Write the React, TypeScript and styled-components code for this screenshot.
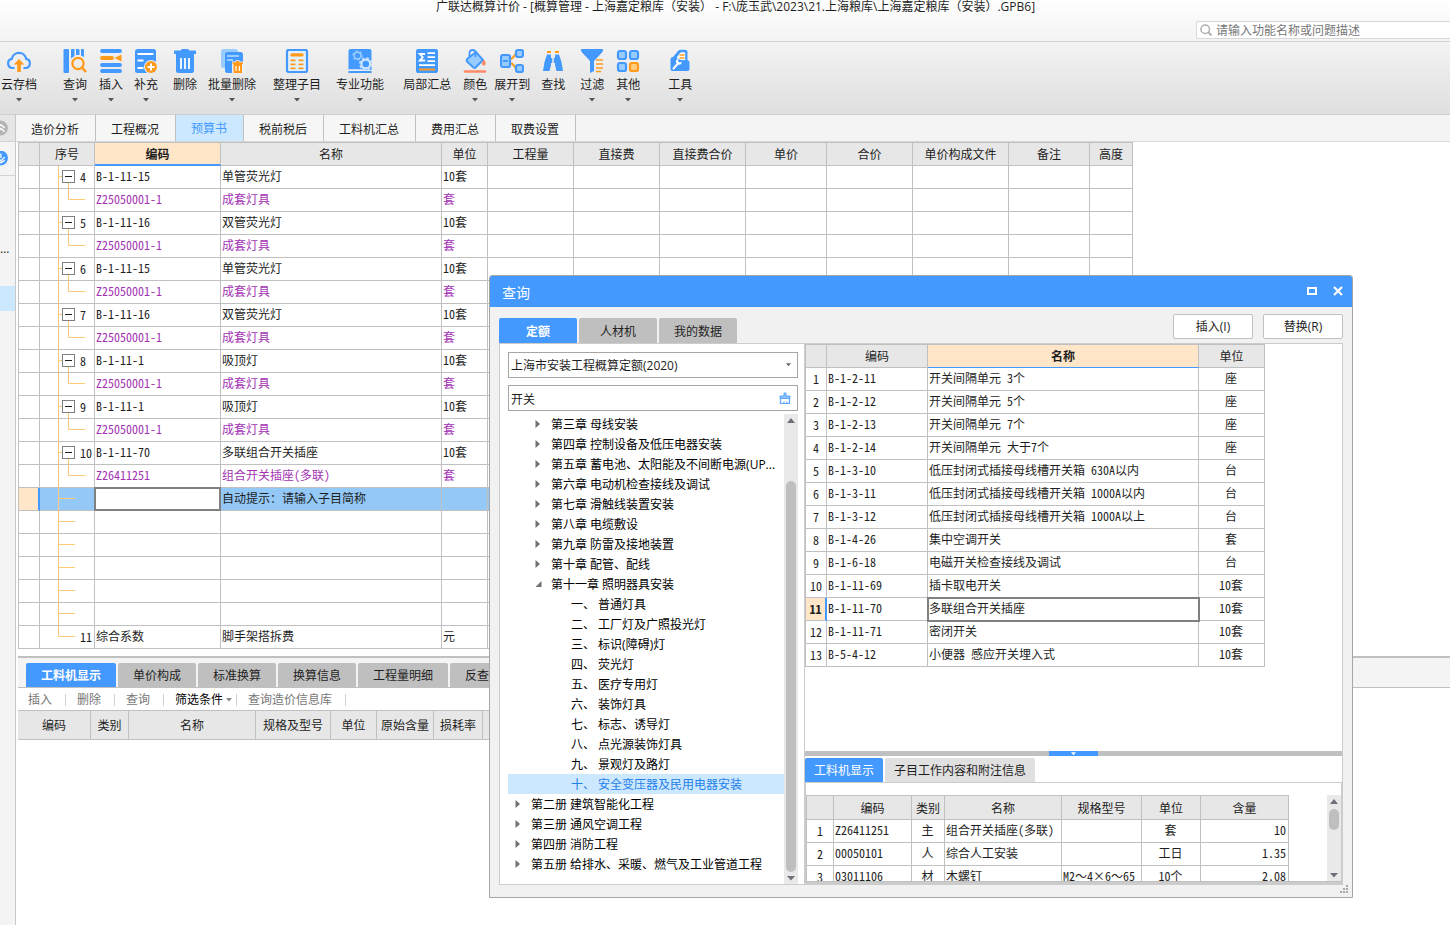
import React from "react";
import styled, { createGlobalStyle, css } from "styled-components";

const BLUE = "#4499ff";
const ORANGE = "#ff9a1a";
const LINE = "#c0c0c0";
const UI = `"Open Sans", "Noto Sans CJK SC", sans-serif`;
const GRID = `"Noto Sans CJK SC", sans-serif`;

const Global = createGlobalStyle`
  *, *::before, *::after { box-sizing: border-box; }
  body { margin: 0; background: #fff; font: 12px/16px ${UI}; color: #1e1e1e; overflow: hidden; }
  button, input, select { font: inherit; color: inherit; margin: 0; padding: 0; border: 0; background: none; border-radius: 0; }
  svg { display: block; }
`;

/* ---------- page frame ---------- */
const Page = styled.div`
  position: relative;
  display: flex;
  flex-direction: column;
  min-height: 100vh;
`;
const TitleBar = styled.header`
  display: flex;
  flex-direction: column;
  height: 42px;
  border-bottom: 1px solid #d2d2d2;
  background: linear-gradient(#ffffff, #f3f3f3);
`;
const Title = styled.h1`
  margin: 0 0 7px;
  padding-left: 21px;
  font-size: 12px;
  line-height: 14px;
  font-weight: 400;
  text-align: center;
  white-space: pre;
`;
const Search = styled.label`
  display: flex;
  align-items: center;
  gap: 4px;
  align-self: flex-end;
  width: 254px;
  height: 18px;
  padding-left: 3px;
  border: 1px solid #d8d8d8;
  border-right: 0;
  border-radius: 2px 0 0 2px;
  background: #fff;
  input {
    flex: 1;
    min-width: 0;
    outline: 0;
    padding-top: 1px;
    line-height: 16px;
    &::placeholder { color: #777; opacity: 1; }
  }
`;
const Toolbar = styled.nav`
  display: flex;
  height: 73px;
  padding: 7px 0 0 1px;
  border-bottom: 1px solid #cfcfcf;
  background: linear-gradient(#f3f3f3, #dfdfdf);
`;
const Tool = styled.button<{ $gap: number }>`
  display: flex;
  flex-direction: column;
  align-items: center;
  align-self: flex-start;
  margin-left: ${(p) => p.$gap}px;
  white-space: nowrap;
  span { margin: 4px 0 5px; line-height: 16px; }
`;
const Columns = styled.div`
  display: flex;
  flex: 1;
`;
const Rail = styled.aside`
  flex: 0 0 16px;
  border-right: 1px solid #c8c8c8;
  background: #f4f4f4;
  overflow: hidden;
`;
const RailCell = styled.div<{ $h: number; $bg?: string; $line?: boolean; $top?: number }>`
  display: flex;
  align-items: center;
  height: ${(p) => p.$h}px;
  padding-top: ${(p) => p.$top ?? 0}px;
  background: ${(p) => p.$bg ?? "transparent"};
  border-bottom: ${(p) => (p.$line ? "1px solid #d2d2d2" : "0")};
`;
const Main = styled.main`
  flex: 1;
  min-width: 0;
  display: flex;
  flex-direction: column;
`;
const SheetTabs = styled.div`
  display: flex;
  height: 27px;
  border-bottom: 1px solid #d8d8d8;
  background: #f4f4f4;
`;
const SheetTab = styled.button<{ $on?: boolean }>`
  padding: ${(p) => (p.$on ? 2 : 4)}px 16px 0 15px;
  border-right: 1px solid ${LINE};
  white-space: nowrap;
  background: ${(p) => (p.$on ? "#cce8ff" : "#f6f6f6")};
  color: ${(p) => (p.$on ? BLUE : "#1e1e1e")};
`;
const Work = styled.div`
  padding-left: 2px;
`;

/* ---------- data grids ---------- */
const Table = styled.table<{ $open?: boolean }>`
  table-layout: fixed;
  width: 0;
  border-collapse: separate;
  border-spacing: 0;
  border-top: 1px solid ${LINE};
  border-left: ${(p) => (p.$open ? "0" : `1px solid ${LINE}`)};
  font-family: ${GRID};
  font-feature-settings: "hwid";
  white-space: nowrap;
  background: #fff;
`;
const FullWidth = styled.span`
  font-feature-settings: normal;
`;
const Th = styled.th<{ $on?: number; $h?: number }>`
  height: ${(p) => p.$h ?? 23}px;
  padding: 0;
  border-right: 1px solid ${LINE};
  border-bottom: 1px solid ${LINE};
  background: #e7e7e7;
  font-weight: 400;
  line-height: 20px;
  ${(p) =>
    p.$on &&
    css`
      background: #ffe6c8;
      border-bottom: ${p.$on}px solid ${BLUE};
      font-weight: 700;
    `}
`;
const focusRing = css`
  outline: 2px solid #808080;
  outline-offset: -1px;
`;
const Td = styled.td<{ $align?: string; $focus?: boolean }>`
  height: 23px;
  padding: 0 2px 2px 1px;
  border-right: 1px solid ${LINE};
  border-bottom: 1px solid ${LINE};
  line-height: 20px;
  text-align: ${(p) => p.$align ?? "left"};
  ${(p) => p.$focus && focusRing}
`;
const Gutter = styled(Td)<{ $current?: boolean }>`
  padding: 0;
  text-align: center;
  ${(p) =>
    p.$current &&
    css`
      background: #ffe6c8;
      border-right: 2px solid ${BLUE};
      font-weight: 700;
    `}
`;
const Row = styled.tr<{ $kind?: "child" | "edit" }>`
  color: ${(p) => (p.$kind === "child" ? "#a333b3" : "#1e1e1e")};
  background: ${(p) => (p.$kind === "edit" ? "#93c8f7" : "#fff")};
`;
const PlainTd = styled(Td)`
  padding: 0;
`;
const CellInput = styled.input`
  display: block;
  width: 100%;
  height: 22px;
  padding: 0 2px;
  background: #fff;
  ${focusRing}
`;
const TreeCell = styled.div`
  display: grid;
  height: 22px;
  > * { grid-area: 1 / 1; }
  svg { overflow: visible; }
`;
const TreeLabel = styled.div`
  display: flex;
  align-items: center;
  gap: 5px;
  height: 21px;
  padding-left: 22px;
`;
const Toggle = styled.button`
  display: grid;
  place-items: center;
  width: 13px;
  height: 13px;
  border: 1px solid #808080;
  background: #fff;
  &::before { content: ""; width: 7px; height: 1px; background: #1e1e1e; }
`;
const ToggleSpace = styled.span`
  width: 13px;
`;

/* ---------- lower panel ---------- */
const TabStrip = styled.div<{ $main?: boolean }>`
  display: flex;
  gap: 2px;
  ${(p) =>
    p.$main &&
    css`
      padding: 5px 0 0 8px;
      border-bottom: 1px solid ${LINE};
      background: #f4f4f4;
    `}
`;
const PanelTab = styled.button<{ $on?: boolean; $pad?: number; $soft?: boolean; $h?: number }>`
  height: ${(p) => p.$h ?? 24}px;
  padding: 2px ${(p) => p.$pad ?? 15}px 0;
  border-radius: 2px 2px 0 0;
  white-space: nowrap;
  background: ${(p) => (p.$on ? BLUE : p.$soft ? "#e0e0e0" : "#bfbfbf")};
  color: ${(p) => (p.$on ? "#fff" : "#1e1e1e")};
  font-weight: ${(p) => (p.$on && !p.$soft ? 700 : 400)};
`;
const Sash = styled.div`
  height: 2px;
  margin-top: 7px;
  background: ${LINE};
`;
const Actions = styled.div`
  display: flex;
  align-items: center;
  height: 22px;
  padding: 1px 0 0 10px;
`;
const Action = styled.button<{ $on?: boolean; $menu?: boolean }>`
  display: flex;
  align-items: center;
  gap: 3px;
  height: 12px;
  padding-right: ${(p) => (p.$menu ? 4 : 13)}px;
  margin-right: 11px;
  border-right: 1px solid #d2d2d2;
  color: ${(p) => (p.$on ? "#000" : "#777")};
  white-space: nowrap;
`;

/* ---------- query window ---------- */
const Dialog = styled.section`
  position: absolute;
  left: 489px;
  top: 275px;
  width: 864px;
  border: 1px solid #a6a6a6;
  border-radius: 3px 3px 0 0;
  background: #f1f1f1;
`;
const DialogTitle = styled.header`
  display: flex;
  align-items: center;
  gap: 16px;
  height: 31px;
  padding: 0 9px 2px 12px;
  border-radius: 2px 2px 0 0;
  background: ${BLUE};
  color: #fff;
  h2 { flex: 1; margin: 0; padding-top: 4px; font-size: 14px; line-height: 20px; font-weight: 400; }
`;
const DialogBar = styled.div`
  display: flex;
  align-items: flex-end;
  justify-content: space-between;
  height: 36px;
  padding: 0 9px;
`;
const DialogButtons = styled.div`
  display: flex;
  gap: 10px;
  padding-bottom: 4px;
`;
const PushButton = styled.button`
  width: 80px;
  height: 25px;
  border: 1px solid ${LINE};
  border-radius: 2px;
  background: #fff;
`;
const DialogBody = styled.div`
  display: flex;
  height: 542px;
  margin: 0 9px;
  border: 1px solid #cccccc;
  background: #fff;
`;
const Browser = styled.div`
  display: flex;
  flex-direction: column;
  gap: 7px;
  width: 304px;
  padding: 8px 6px 0 8px;
`;
const Field = styled.div`
  display: grid;
  align-items: center;
  height: 26px;
  border: 1px solid #a6a6a6;
  > * { grid-area: 1 / 1; }
  select, input { width: 100%; height: 24px; padding: 1px 24px 0 2px; appearance: none; outline: 0; }
  svg { justify-self: end; margin-right: 6px; pointer-events: none; }
`;
const TreeArea = styled.div`
  display: flex;
  flex: 1;
  min-height: 0;
  margin-top: -4px;
`;
const TreeList = styled.ul`
  flex: 1;
  min-width: 0;
  margin: 0;
  padding: 0;
  list-style: none;
`;
const TreeItem = styled.button<{ $level: number; $on?: boolean }>`
  display: flex;
  align-items: center;
  gap: 8px;
  width: 100%;
  height: 20px;
  padding-left: ${(p) => p.$level * 20 - 15}px;
  text-align: left;
  background: ${(p) => (p.$on ? "#cce8ff" : "transparent")};
  color: ${(p) => (p.$on ? "#1f7fe8" : "#000")};
  svg { flex: 0 0 10px; }
  span { overflow: hidden; text-overflow: ellipsis; white-space: pre; padding-top: 2px; margin-right: 4px; }
`;
const Scroll = styled.div<{ $before: number; $thumb: number }>`
  display: flex;
  flex-direction: column;
  align-items: center;
  flex: 0 0 14px;
  padding: 4px 0 3px;
  background: #e9e9e9;
  i { width: 10px; height: ${(p) => p.$thumb}px; margin: ${(p) => p.$before}px 0 auto; border-radius: 5px; background: #bfbfbf; }
`;
const Results = styled.div`
  flex: 1;
  min-width: 0;
  display: flex;
  flex-direction: column;
  border-left: 1px solid #cccccc;
`;
const ResultsTop = styled.div`
  flex: 0 0 407px;
`;
const Splitter = styled.div`
  display: flex;
  justify-content: center;
  height: 5px;
  margin-bottom: 2px;
  background: ${LINE};
`;
const SplitterGrip = styled.button`
  display: grid;
  place-items: center;
  width: 49px;
  height: 5px;
  background: ${BLUE};
`;
const DetailFrame = styled.div`
  flex: 1;
  min-height: 0;
  display: flex;
  padding-top: 12px;
  border: 1px solid #cccccc;
  border-bottom-width: 2px;
`;
const DetailScroll = styled.div`
  flex: 1;
  display: flex;
  justify-content: space-between;
  overflow: hidden;
  border-bottom: 1px solid ${LINE};
`;
const DialogFoot = styled.footer`
  display: flex;
  justify-content: flex-end;
  height: 12px;
  padding-right: 3px;
`;

/* ---------- icons ---------- */
const Down = ({ c = "#555", w = 6 }: { c?: string; w?: number }) => (
  <svg width={w} height="4" viewBox="0 0 6 4"><path d="M0 0h6L3 3.4z" fill={c} /></svg>
);
const Arrow = ({ up }: { up?: boolean }) => (
  <svg width="10" height="6" viewBox="0 0 10 6"><path d={up ? "M1 5h8L5 0z" : "M1 1h8L5 5.5z"} fill="#70707a" /></svg>
);
const Icon = ({ children }: { children: React.ReactNode }) => (
  <svg width="24" height="24" viewBox="0 0 24 24" fill="none">{children}</svg>
);
const PALE = "#99ccff";

const icons: Record<string, React.ReactNode> = {
  cloud: (
    <>
      <path d="M7.5 19H5.6A4.6 4.6 0 0 1 4.8 9.9A7.3 7.3 0 0 1 19.200 9.900A4.6 4.6 0 0 1 18.400 19H16.500" stroke={BLUE} strokeWidth="2.2" />
      <path d="M12 10l5.2 5.5h-3.4V23h-3.6v-7.5H6.8z" fill={ORANGE} />
    </>
  ),
  query: (
    <>
      <rect x="0.5" width="5.5" height="24" rx="1" fill={BLUE} />
      <path d="M8 1q0-1 1-1h2.500v7L8 9.500zM13 0h2.500q1 0 1 1v5H13zM18 0h2q1 0 1 1v7L18 6.500z" fill={BLUE} />
      <circle cx="15" cy="14.500" r="5.6" stroke={ORANGE} strokeWidth="2.2" />
      <path d="M19 18.500l4 4.500" stroke={ORANGE} strokeWidth="2.6" />
    </>
  ),
  insert: (
    <>
      <path d="M3 2h18M3 16h18M3 22h18" stroke={BLUE} strokeWidth="3.8" strokeLinecap="round" />
      <path d="M3 9h10" stroke={ORANGE} strokeWidth="3.8" strokeLinecap="round" />
      <path d="M22.500 5.6v6.8L15.500 9z" fill={ORANGE} />
    </>
  ),
  add: (
    <>
      <rect x="1" width="21" height="24" rx="2.5" fill={BLUE} />
      <path d="M3.500 5h16M3.500 11.500h6M3.500 19h6" stroke="#fff" strokeWidth="1.8" />
      <circle cx="17" cy="18" r="7" fill="#e9f3ff" />
      <circle cx="17" cy="18" r="6" fill={ORANGE} />
      <path d="M17 14.500v7M13.500 18h7" stroke="#fff" strokeWidth="2" />
    </>
  ),
  trash: (
    <>
      <path d="M1 2.500q0-1 1-1h5.500L9 0h6l1.500 1.500H22q1 0 1 1V5H1z" fill={BLUE} />
      <path d="M3 5h18v16.500q0 2.500-2.500 2.500h-13Q3 24 3 21.500z" fill={BLUE} />
      <path d="M8 9v11M12 9v11M16 9v11" stroke="#fff" strokeWidth="1.8" />
    </>
  ),
  batch: (
    <>
      <rect x="1" width="17" height="19" rx="2.5" fill={PALE} />
      <rect x="5" y="3" width="18" height="21" rx="2.5" fill={BLUE} />
      <path d="M7 7h12M7 11h6" stroke={PALE} strokeWidth="1.8" />
      <path d="M12 12.500h3.500v-1.300h4v1.300H24v12H12z" fill="#e9f3ff" />
      <path d="M12.500 13.200H16V12h3v1.200h4v2h-1V24h-8.500v-8.800h-1z" fill={ORANGE} />
      <path d="M16 17v5M19.400 17v5" stroke="#fff" strokeWidth="1.2" />
    </>
  ),
  sort: (
    <>
      <rect x="2" y="1" width="20" height="22" rx="1.5" fill="#e3f1ff" stroke={BLUE} strokeWidth="2.2" />
      <path d="M7 5.900h10" stroke={ORANGE} strokeWidth="3.4" strokeLinecap="round" />
      <path d="M5.500 11.400h5M13.500 11.400h5M5.500 15.400h5M13.500 15.400h5M5.500 19.400h5M13.500 19.400h5" stroke={ORANGE} strokeWidth="1.9" />
    </>
  ),
  pro: (
    <>
      <path d="M0.500 2q0-2 2-2h19q2 0 2 2v19h-23z" fill={BLUE} />
      <path d="M0.500 23h23" stroke={BLUE} strokeWidth="2" />
      <circle cx="9.5" cy="6.5" r="3.4" stroke={PALE} strokeWidth="1.6" />
      <circle cx="9.5" cy="6.5" r="4.6" stroke={PALE} strokeWidth="1.2" strokeDasharray="2 2.800" />
      <circle cx="17.8" cy="15" r="4.4" stroke="#cfe5ff" strokeWidth="2.2" />
      <circle cx="17.8" cy="15" r="6" stroke="#cfe5ff" strokeWidth="1.4" strokeDasharray="2.600 2.100" />
      <path d="M1 20.800h14" stroke="#e3f1ff" strokeWidth="1.2" />
    </>
  ),
  sum: (
    <>
      <rect x="1" width="22" height="24" rx="2" fill={BLUE} />
      <path d="M10 5H4.800l3 3.200-3 3.300H10" stroke="#fff" strokeWidth="1.8" />
      <path d="M12.500 4.200h7.500M12.500 8.200h7.500M12.500 12.200h7.500M4 16.200h16" stroke="#fff" strokeWidth="1.8" />
      <path d="M4 20.500h16" stroke={ORANGE} strokeWidth="2" />
    </>
  ),
  color: (
    <>
      <path d="M4 10l9-7 7 8-7.500 7.500q-1 1-2 0L4.500 13q-1.500-1.500-.5-3z" fill={PALE} stroke={BLUE} strokeWidth="2" />
      <path d="M6.500 9V4q0-3 3-3t3 3v4" stroke={BLUE} strokeWidth="1.8" />
      <path d="M20.800 11q3 4.600 0 5.200-3-.6 0-5.200z" fill="#ff8a65" stroke="#ff8a65" />
      <path d="M2 22.500h20" stroke="#ff8a65" strokeWidth="2.6" strokeLinecap="round" />
    </>
  ),
  expand: (
    <>
      <path d="M10.500 9.500h1.500L16 5M10.500 14.500h1.500L16 19" stroke={ORANGE} strokeWidth="2" />
      <rect x="1" y="6" width="9" height="12" rx="2" fill={PALE} stroke={BLUE} strokeWidth="2.2" />
      <rect x="16" y="1" width="7" height="7" rx="2" fill={PALE} stroke={BLUE} strokeWidth="2.2" />
      <rect x="16" y="16" width="7" height="7" rx="2" fill={PALE} stroke={BLUE} strokeWidth="2.2" />
      <path d="M3 12h5" stroke={BLUE} strokeWidth="2" />
    </>
  ),
  find: (
    <>
      <path d="M6 3h4M14 3h4" stroke={ORANGE} strokeWidth="2.2" />
      <path d="M6 5.500h4V16l-1.500 6H2L3.500 13zM14 5.500h4l2.500 7.500 1.500 9h-6.500L14 16zM10 9h4v5h-4z" fill={BLUE} />
      <path d="M12 5v13" stroke="#ebebeb" strokeWidth="1.6" />
    </>
  ),
  filter: (
    <>
      <path d="M1 0h22q.5 2-1.500 4L14 12v10l-4 2V12L2.500 4Q.5 2 1 0z" fill={BLUE} />
      <path d="M16 11h7M16 15h7M16 19h7M16 22.500h5" stroke={ORANGE} strokeWidth="1.7" />
    </>
  ),
  other: (
    <>
      <rect x="2" y="2" width="8" height="8" rx="2" fill={PALE} stroke={BLUE} strokeWidth="2.2" />
      <rect x="14" y="2" width="8" height="8" rx="2" fill={PALE} stroke={BLUE} strokeWidth="2.2" />
      <rect x="2" y="14" width="8" height="8" rx="2" fill={PALE} stroke={BLUE} strokeWidth="2.2" />
      <rect x="14" y="14" width="8" height="8" rx="2" fill="#ffcc80" stroke={ORANGE} strokeWidth="2.2" />
    </>
  ),
  tools: (
    <>
      <path d="M5 8L10 2q1-1.200 2.500-1.200H17q2.500 0 2.500 2.500V11q2 .5 2 2.500v6.500q0 2-2 2h-15q-2 0-2-2V10.500Q2.500 8 5 8z" fill={BLUE} />
      <path d="M8.500 9L12 4q.6-.8 1.500-.8H16q1.200 0 1.200 1.200V11H13L8.500 9z" fill="#fff" />
      <path d="M11.500 6h5M11.500 9h5" stroke={ORANGE} strokeWidth="1.6" />
      <path d="M5.500 19.500l4-4.500" stroke="#fff" strokeWidth="2" strokeLinecap="round" />
      <path d="M7.800 12.500q.3-2.500 3-2.800l-.8 2.500 1.700 1.300 2-.8q.1 3-2.700 3.100-2.700-.3-3.200-3.300z" fill="#fff" />
    </>
  ),
};

const tools: [string, string, number, boolean][] = [
  ["cloud", "云存档", 0, true],
  ["query", "查询", 26, true],
  ["insert", "插入", 12, true],
  ["add", "补充", 11, true],
  ["trash", "删除", 15, false],
  ["batch", "批量删除", 11, true],
  ["sort", "整理子目", 17, true],
  ["pro", "专业功能", 15, true],
  ["sum", "局部汇总", 19, false],
  ["color", "颜色", 12, true],
  ["expand", "展开到", 7, true],
  ["find", "查找", 11, false],
  ["filter", "过滤", 15, true],
  ["other", "其他", 12, true],
  ["tools", "工具", 28, true],
];

/* ---------- data ---------- */
const mainCols: [string, number][] = [
  ["", 21], ["序号", 55], ["编码", 126], ["名称", 221], ["单位", 46], ["工程量", 86], ["直接费", 86],
  ["直接费合价", 86], ["单价", 81], ["合价", 86], ["单价构成文件", 96], ["备注", 81], ["高度", 43],
];
type Kind = "item" | "child" | "edit" | "blank" | "last";
const items: [string, string, string, string, string][] = [
  ["4", "B-1-11-15", "单管荧光灯", "Z25050001-1", "成套灯具"],
  ["5", "B-1-11-16", "双管荧光灯", "Z25050001-1", "成套灯具"],
  ["6", "B-1-11-15", "单管荧光灯", "Z25050001-1", "成套灯具"],
  ["7", "B-1-11-16", "双管荧光灯", "Z25050001-1", "成套灯具"],
  ["8", "B-1-11-1", "吸顶灯", "Z25050001-1", "成套灯具"],
  ["9", "B-1-11-1", "吸顶灯", "Z25050001-1", "成套灯具"],
  ["10", "B-1-11-70", "多联组合开关插座", "Z26411251", "组合开关插座(多联)"],
];
const blank = { kind: "blank" as Kind, no: "", code: "", name: "", unit: "" };
const mainRows: (typeof blank)[] = [
  ...items.flatMap(([no, code, name, c2, n2]) => [
    { kind: "item" as Kind, no, code, name, unit: "10套" },
    { kind: "child" as Kind, no: "", code: c2, name: n2, unit: "套" },
  ]),
  { kind: "edit" as Kind, no: "", code: "", name: "自动提示：请输入子目简称", unit: "" },
  blank, blank, blank, blank, blank,
  { kind: "last" as Kind, no: "11", code: "综合系数", name: "脚手架搭拆费", unit: "元" },
];
const guides: Record<Kind, string> = {
  item: "M18.500 0v23M18 10.500h4M28.500 17v6",
  child: "M18.500 0v23M28.500 0v10.500H45",
  edit: "M18.500 0v23M18 10.500h17",
  blank: "M18.500 0v23M18 10.500h17",
  last: "M18.500 0v10.500H35",
};

const results: [string, string, string][] = [
  ["B-1-2-11", "开关间隔单元 3个", "座"],
  ["B-1-2-12", "开关间隔单元 5个", "座"],
  ["B-1-2-13", "开关间隔单元 7个", "座"],
  ["B-1-2-14", "开关间隔单元 大于7个", "座"],
  ["B-1-3-10", "低压封闭式插接母线槽开关箱 630A以内", "台"],
  ["B-1-3-11", "低压封闭式插接母线槽开关箱 1000A以内", "台"],
  ["B-1-3-12", "低压封闭式插接母线槽开关箱 1000A以上", "台"],
  ["B-1-4-26", "集中空调开关", "套"],
  ["B-1-6-18", "电磁开关检查接线及调试", "台"],
  ["B-1-11-69", "插卡取电开关", "10套"],
  ["B-1-11-70", "多联组合开关插座", "10套"],
  ["B-1-11-71", "密闭开关", "10套"],
  ["B-5-4-12", "小便器 感应开关埋入式", "10套"],
];

const tree: [number, string, boolean?][] = [
  [2, "第三章 母线安装"],
  [2, "第四章 控制设备及低压电器安装"],
  [2, "第五章 蓄电池、太阳能及不间断电源(UP..."],
  [2, "第六章 电动机检查接线及调试"],
  [2, "第七章 滑触线装置安装"],
  [2, "第八章 电缆敷设"],
  [2, "第九章 防雷及接地装置"],
  [2, "第十章 配管、配线"],
  [2, "第十一章 照明器具安装", true],
  [3, "一、 普通灯具"],
  [3, "二、 工厂灯及广照投光灯"],
  [3, "三、 标识(障碍)灯"],
  [3, "四、 荧光灯"],
  [3, "五、 医疗专用灯"],
  [3, "六、 装饰灯具"],
  [3, "七、 标志、诱导灯"],
  [3, "八、 点光源装饰灯具"],
  [3, "九、 景观灯及路灯"],
  [3, "十、 安全变压器及民用电器安装"],
  [1, "第二册 建筑智能化工程"],
  [1, "第三册 通风空调工程"],
  [1, "第四册 消防工程"],
  [1, "第五册 给排水、采暖、燃气及工业管道工程"],
];

const detailCols: [string, number][] = [
  ["", 27], ["编码", 78], ["类别", 33], ["名称", 117], ["规格型号", 80], ["单位", 59], ["含量", 88],
];
const details = [
  ["Z26411251", "主", "组合开关插座(多联)", "", "套", "10"],
  ["00050101", "人", "综合人工安装", "", "工日", "1.35"],
  ["03011106", "材", "木螺钉", "M2～4×6～65", "10个", "2.08"],
];
const lowerCols: [string, number][] = [
  ["编码", 73], ["类别", 38], ["名称", 127], ["规格及型号", 75], ["单位", 46], ["原始含量", 57], ["损耗率", 49], ["含量", 60],
];

const Cols = ({ of }: { of: [string, number][] }) => (
  <colgroup>{of.map(([n, w], i) => <col key={n + i} style={{ width: w }} />)}</colgroup>
);

/* Size ranges keep their wave dash at full width between half-width digits. */
const Spec = ({ text }: { text: string }) => (
  <>{text.split(/(～)/).map((part, i) => (part === "～" ? <FullWidth key={i}>{part}</FullWidth> : part))}</>
);

/* ---------- sections ---------- */
const MainGrid = () => (
  <Table>
    <Cols of={mainCols} />
    <thead>
      <tr>{mainCols.map(([n], i) => <Th key={i} $on={n === "编码" ? 2 : undefined}>{n}</Th>)}</tr>
    </thead>
    <tbody>
      {mainRows.map((r, i) => (
        <Row key={i} $kind={r.kind === "child" || r.kind === "edit" ? r.kind : undefined}>
          <Gutter $current={r.kind === "edit"} />
          <PlainTd>
            <TreeCell>
              <svg width="54" height="22" fill="none" stroke="#ffc878"><path d={guides[r.kind]} /></svg>
              <TreeLabel>
                {r.kind === "item" ? <Toggle aria-label="折叠" /> : <ToggleSpace />}
                {r.no}
              </TreeLabel>
            </TreeCell>
          </PlainTd>
          {r.kind === "edit" ? <PlainTd><CellInput aria-label="编码" /></PlainTd> : <Td>{r.code}</Td>}
          <Td>{r.name}</Td>
          <Td>{r.unit}</Td>
          {mainCols.slice(5).map(([n]) => <Td key={n} />)}
        </Row>
      ))}
    </tbody>
  </Table>
);

const QueryDialog = () => (
  <Dialog role="dialog" aria-label="查询">
    <DialogTitle>
      <h2>查询</h2>
      <button aria-label="最大化">
        <svg width="10" height="10" viewBox="0 0 10 10" fill="none"><rect x="1" y="2" width="8" height="6" stroke="#fff" strokeWidth="2" /></svg>
      </button>
      <button aria-label="关闭">
        <svg width="10" height="10" viewBox="0 0 10 10"><path d="M1 1l8 8M9 1L1 9" stroke="#fff" strokeWidth="2.2" /></svg>
      </button>
    </DialogTitle>
    <DialogBar>
      <TabStrip role="tablist">
        <PanelTab role="tab" $h={25} $on $pad={27}>定额</PanelTab>
        <PanelTab role="tab" $h={25} $pad={21}>人材机</PanelTab>
        <PanelTab role="tab" $h={25}>我的数据</PanelTab>
      </TabStrip>
      <DialogButtons>
        <PushButton>插入(I)</PushButton>
        <PushButton>替换(R)</PushButton>
      </DialogButtons>
    </DialogBar>
    <DialogBody>
      <Browser>
        <Field>
          <select aria-label="定额库"><option>上海市安装工程概算定额(2020)</option></select>
          <Down c="#666" w={5} />
        </Field>
        <Field>
          <input aria-label="关键字" defaultValue="开关" />
          <svg width="12" height="13" viewBox="0 0 12 13" fill="none">
            <path d="M5 1h2v3h4v2.500H1V4h4z" fill="#8cc0ff" stroke="#5ba7ff" />
            <path d="M1.500 6.500v5h9v-5M5 11.500v-2M8 11.500v-2" stroke="#5ba7ff" strokeWidth="1.2" />
          </svg>
        </Field>
        <TreeArea>
          <TreeList>
            {tree.map(([level, text, open]) => (
              <li key={text}>
                <TreeItem $level={level} $on={text.startsWith("十、")}>
                  <svg width="10" height="10" viewBox="0 0 10 10">
                    {level < 3 && <path d={open ? "M8.500 2v6h-6z" : "M2.500 1v8L7 5z"} fill="#707070" />}
                  </svg>
                  <span>{text}</span>
                </TreeItem>
              </li>
            ))}
          </TreeList>
          <Scroll $before={57} $thumb={391}><Arrow up /><i /><Arrow /></Scroll>
        </TreeArea>
      </Browser>
      <Results>
        <ResultsTop>
          <Table>
            <Cols of={[["", 21], ["编码", 101], ["名称", 271], ["单位", 66]]} />
            <thead>
              <tr><Th /><Th>编码</Th><Th $on={1}>名称</Th><Th>单位</Th></tr>
            </thead>
            <tbody>
              {results.map(([code, name, unit], i) => (
                <Row key={code}>
                  <Gutter $current={i === 10}>{i + 1}</Gutter>
                  <Td>{code}</Td>
                  <Td $focus={i === 10}>{name}</Td>
                  <Td $align="center">{unit}</Td>
                </Row>
              ))}
            </tbody>
          </Table>
        </ResultsTop>
        <Splitter><SplitterGrip aria-label="收起"><Down c="#fff" w={5} /></SplitterGrip></Splitter>
        <TabStrip role="tablist">
          <PanelTab role="tab" $on $soft $pad={9}>工料机显示</PanelTab>
          <PanelTab role="tab" $soft $pad={9}>子目工作内容和附注信息</PanelTab>
        </TabStrip>
        <DetailFrame>
          <DetailScroll>
            <Table>
              <Cols of={detailCols} />
              <thead><tr>{detailCols.map(([n], i) => <Th key={i} $h={24}>{n}</Th>)}</tr></thead>
              <tbody>
                {details.map((d, i) => (
                  <Row key={d[0]}>
                    <Gutter>{i + 1}</Gutter>
                    <Td>{d[0]}</Td>
                    <Td $align="center">{d[1]}</Td>
                    <Td>{d[2]}</Td>
                    <Td><Spec text={d[3]} /></Td>
                    <Td $align="center">{d[4]}</Td>
                    <Td $align="right">{d[5]}</Td>
                  </Row>
                ))}
              </tbody>
            </Table>
            <Scroll $before={4} $thumb={21}><Arrow up /><i /><Arrow /></Scroll>
          </DetailScroll>
        </DetailFrame>
      </Results>
    </DialogBody>
    <DialogFoot>
      <svg width="9" height="9" viewBox="0 0 9 9" fill="#a6a6a6">
        <path d="M6 0h2v2H6zM3 3h2v2H3zM6 3h2v2H6zM0 6h2v2H0zM3 6h2v2H3zM6 6h2v2H6z" />
      </svg>
    </DialogFoot>
  </Dialog>
);

export default function App() {
  return (
    <Page>
      <Global />
      <TitleBar>
        <Title>{"广联达概算计价 - [概算管理 - 上海嘉定粮库（安装） - F:\\庞玉武\\2023\\21.上海粮库\\上海嘉定粮库（安装）.GPB6]"}</Title>
        <Search>
          <svg width="12" height="12" viewBox="0 0 12 12" fill="none" stroke="#b0b0b0" strokeWidth="1.5">
            <circle cx="5.2" cy="5.2" r="4.3" /><path d="M8.500 8.500l3 3" strokeWidth="2" />
          </svg>
          <input placeholder="请输入功能名称或问题描述" aria-label="搜索" />
        </Search>
      </TitleBar>
      <Toolbar>
        {tools.map(([icon, label, gap, menu]) => (
          <Tool key={icon} $gap={gap}>
            <Icon>{icons[icon]}</Icon>
            <span>{label}</span>
            {menu && <Down />}
          </Tool>
        ))}
      </Toolbar>
      <Columns>
        <Rail>
          <RailCell $h={27} $bg="#e6e6e6" $line>
            <svg width="16" height="16" viewBox="0 0 16 16" fill="none">
              <circle cx="0.5" cy="8" r="8" fill="#b4b4b4" />
              <path d="M-3 8l4-3.500L5 8M-3 12l4-3.500L5 12" stroke="#fff" strokeWidth="1.4" />
            </svg>
          </RailCell>
          <RailCell $h={34} $line>
            <svg width="16" height="16" viewBox="0 0 16 16" fill="none">
              <circle cx="0.5" cy="7" r="8" fill={BLUE} />
              <path d="M1 2v5M-3 6l4 4 4-4M-3 9.500l4 2.500 4-2.500" stroke="#fff" strokeWidth="1.4" />
            </svg>
          </RailCell>
          <RailCell $h={110} $top={36}><span>…</span></RailCell>
          <RailCell $h={25} $bg="#cce8ff" />
        </Rail>
        <Main>
          <SheetTabs role="tablist">
            {["造价分析", "工程概况", "预算书", "税前税后", "工料机汇总", "费用汇总", "取费设置"].map((t) => (
              <SheetTab key={t} role="tab" $on={t === "预算书"}>{t}</SheetTab>
            ))}
          </SheetTabs>
          <Work>
            <MainGrid />
            <Sash />
            <TabStrip $main role="tablist">
              {["工料机显示", "单价构成", "标准换算", "换算信息", "工程量明细", "反查图形工程量"].map((t, i) => (
                <PanelTab key={t} role="tab" $on={i === 0}>{t}</PanelTab>
              ))}
            </TabStrip>
            <Actions>
              <Action>插入</Action>
              <Action>删除</Action>
              <Action>查询</Action>
              <Action $on $menu>筛选条件 <Down c="#888" /></Action>
              <Action>查询造价信息库</Action>
            </Actions>
            <Table $open>
              <Cols of={lowerCols} />
              <thead><tr>{lowerCols.map(([n]) => <Th key={n} $h={29}>{n}</Th>)}</tr></thead>
            </Table>
          </Work>
        </Main>
      </Columns>
      <QueryDialog />
    </Page>
  );
}
